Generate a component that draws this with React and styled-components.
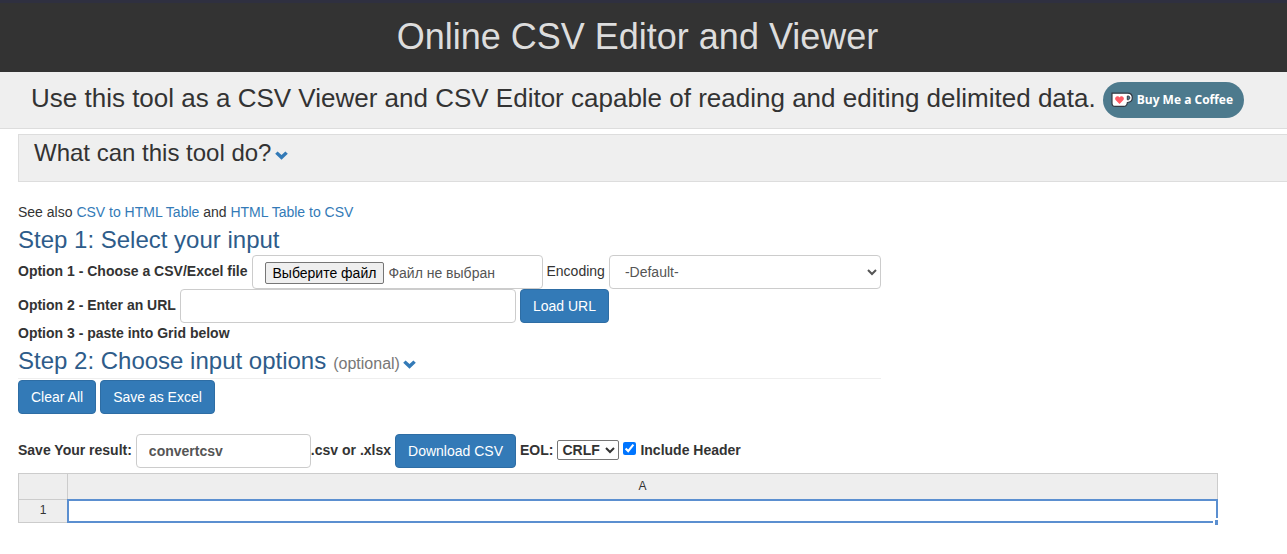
import React, { useState } from "react";
import styled, { createGlobalStyle } from "styled-components";

const GlobalStyle = createGlobalStyle`
  *, *::before, *::after { box-sizing: border-box; }
  body {
    margin: 0;
    background: #fff;
    color: #333;
    font: 14px/20px "Liberation Sans", Arial, sans-serif;
    overflow-x: hidden;
  }
  button, input, select { font-family: inherit; font-size: 14px; }
`;

const Header = styled.header`
  background: #333;
  border-top: 3px solid #2f3040;
  padding: 14px 12px 15px 0;
  text-align: center;
`;

const Title = styled.h1`
  margin: 0;
  color: #ddd;
  font-size: 36px;
  font-weight: 400;
  line-height: 40px;
`;

const Intro = styled.section`
  display: flex;
  align-items: flex-start;
  gap: 7px;
  padding: 10px 0 10px 31px;
  background: #efefef;
  border-bottom: 1px solid #ddd;
`;

const Lead = styled.h2`
  margin: 0;
  font-size: 26px;
  font-weight: 400;
  line-height: 32px;
`;

const CoffeeButton = styled.a`
  display: flex;
  align-items: center;
  gap: 4px;
  flex: none;
  width: 141px;
  height: 36px;
  padding-left: 8px;
  border-radius: 18px;
  background: #4d7a8d;
  color: #fff;
  font: 700 12px/20px "Open Sans", sans-serif;
  white-space: nowrap;
  text-decoration: none;
`;

const About = styled.section`
  margin: 5px 0 20px 18px;
  padding: 3px 15px 14px;
  background: #efefef;
  border: 1px solid #ddd;
  border-right: 0;
`;

const AboutTitle = styled.h3`
  display: flex;
  align-items: center;
  gap: 4px;
  margin: 0;
  font-size: 24px;
  font-weight: 400;
  line-height: 29px;
`;

const Toggle = styled.button`
  display: flex;
  padding: 7px 0 1px;
  border: 0;
  background: none;
  color: #337ab7;
  cursor: pointer;
`;

const Main = styled.main`
  padding: 0 18px 30px;
`;

const Form = styled.form`
  max-width: 863px;
`;

const SeeAlso = styled.p`
  margin: 0;
`;

const Link = styled.a`
  color: #337ab7;
  text-decoration: none;
`;

const StepTitle = styled.h3`
  display: flex;
  align-items: baseline;
  margin: 0;
  padding: ${(p) => (p.$ruled ? "5px 0 4px" : "5px 0 2px")};
  border-bottom: ${(p) => (p.$ruled ? "1px solid #eee" : "0")};
  color: #2e5c8a;
  font-size: 24px;
  font-weight: 400;
  line-height: 26px;
`;

const Optional = styled.small`
  margin: 0 3px 0 7px;
  color: #777;
  font-size: 16px;
  line-height: 16px;
`;

const Row = styled.div`
  display: flex;
  align-items: center;
  gap: 4px;
  margin-top: ${(p) => p.$top || 0}px;
`;

const Label = styled.label`
  flex: none;
  padding-bottom: 2px;
  font-weight: ${(p) => (p.$plain ? 400 : 700)};
`;

const Note = styled.p`
  margin: 0;
  font-weight: 700;
`;

const fieldWidth = (p) => `width: ${p.$width}px;`;

const TextField = styled.input`
  ${fieldWidth}
  height: 34px;
  padding: 6px 12px;
  border: 1px solid #ccc;
  border-radius: 4px;
  background: #fff;
  color: #555;
  font-weight: ${(p) => (p.$bold ? 700 : 400)};
`;

const FileField = styled.label`
  ${fieldWidth}
  display: flex;
  align-items: center;
  gap: 4px;
  height: 34px;
  padding: 2px 12px 0;
  border: 1px solid #ccc;
  border-radius: 4px;
  color: #555;
`;

const HiddenFile = styled.input`
  position: absolute;
  width: 1px;
  height: 1px;
  opacity: 0;
`;

const FileButton = styled.span`
  padding: 0 7px;
  border: 1px solid #767676;
  border-radius: 2px;
  background: #efefef;
  color: #000;
`;

const SelectBox = styled.select`
  flex: 1;
  min-width: 0;
  height: 34px;
  padding: 6px 12px 6px 11px;
  border: 1px solid #ccc;
  border-radius: 4px;
  background: #fff;
  color: #555;
`;

const SmallSelect = styled.select`
  width: 62px;
  height: 20px;
  margin-bottom: 3px;
  padding: 0;
  border: 1px solid #767676;
  border-radius: 2px;
  background: #fff;
  color: #333;
  font-weight: 700;
`;

const Checkbox = styled.input`
  width: 13px;
  height: 13px;
  margin: 0 0 6px;
`;

const Button = styled.button`
  height: 34px;
  padding: 6px 12px;
  border: 1px solid #2e6da4;
  border-radius: 4px;
  background: #337ab7;
  color: #fff;
  line-height: 20px;
  white-space: nowrap;
  cursor: pointer;
`;

const SaveName = styled.div`
  display: flex;
  align-items: center;
`;

const Grid = styled.table`
  width: 100%;
  max-width: 1200px;
  margin-top: 5px;
  border-collapse: separate;
  border-spacing: 0;
  table-layout: fixed;
  border-top: 1px solid #ccc;
  border-left: 1px solid #ccc;
`;

const HeadCell = styled.th`
  width: ${(p) => (p.$narrow ? "49px" : "auto")};
  height: ${(p) => (p.$tall ? 26 : 23)}px;
  padding: 0 0 2px;
  border-right: 1px solid #ccc;
  border-bottom: 1px solid #ccc;
  background: #eee;
  color: #333;
  font-size: 12px;
  font-weight: 400;
  line-height: 20px;
  text-align: center;
`;

const DataCell = styled.td`
  position: relative;
  padding: 0;
  background: #fff;
`;

const Selection = styled.div`
  position: absolute;
  inset: -1px 0 0 -1px;
  border: 2px solid #5b8fd0;

  &::after {
    content: "";
    position: absolute;
    right: -2px;
    bottom: -4px;
    width: 5px;
    height: 7px;
    border: 2px solid #fff;
    border-right-width: 0;
    border-bottom-width: 0;
    background: #5b8fd0;
  }
`;

const Chevron = () => (
  <svg width="13" height="9" viewBox="0 0 13 9" aria-hidden="true">
    <path d="M2.6 0.4 6.5 4.1 10.4 0.4 12.8 2.8 6.5 8.8 0.2 2.8Z" fill="currentColor" />
  </svg>
);

const Cup = () => (
  <svg width="22" height="16" viewBox="0 0 22 16" aria-hidden="true">
    <path
      d="M1 1.2H16.5C19.5 1.2 21.3 3 21.3 5.8S19.3 10.3 16.4 10.5C16.1 13.1 15 14.4 12.8 14.4H4C2 14.4 1 13.3 1 11.3Z"
      fill="#fff"
      stroke="#323842"
      strokeWidth="1.2"
    />
    <path d="M16.3 4H17C18.2 4 18.8 4.7 18.8 5.8S18.1 7.8 17 7.8H16.3Z" fill="#4d7a8d" stroke="#323842" />
    <path
      d="M8.5 12 4.8 8.3C3.6 7 4 4.9 5.5 4.4 6.8 3.9 7.9 4.5 8.5 5.4 9.1 4.5 10.3 3.9 11.5 4.4 13 4.9 13.4 7 12.2 8.3Z"
      fill="#ff5a64"
    />
  </svg>
);

export default function App() {
  const [fileName, setFileName] = useState("Файл не выбран");

  return (
    <>
      <GlobalStyle />
      <Header>
        <Title>Online CSV Editor and Viewer</Title>
      </Header>
      <Intro>
        <Lead>Use this tool as a CSV Viewer and CSV Editor capable of reading and editing delimited data.</Lead>
        <CoffeeButton href="#coffee">
          <Cup />
          Buy Me a Coffee
        </CoffeeButton>
      </Intro>
      <About>
        <AboutTitle>
          What can this tool do?
          <Toggle type="button" aria-label="Show details">
            <Chevron />
          </Toggle>
        </AboutTitle>
      </About>
      <Main>
        <Form onSubmit={(e) => e.preventDefault()}>
          <SeeAlso>
            See also <Link href="#csv-to-html">CSV to HTML Table</Link> and{" "}
            <Link href="#html-to-csv">HTML Table to CSV</Link>
          </SeeAlso>
          <StepTitle>Step 1: Select your input</StepTitle>
          <Row>
            <Label htmlFor="file">Option 1 - Choose a CSV/Excel file</Label>
            <FileField $width={291}>
              <HiddenFile
                id="file"
                type="file"
                onChange={(e) => setFileName(e.target.files[0]?.name || "Файл не выбран")}
              />
              <FileButton>Выберите файл</FileButton>
              {fileName}
            </FileField>
            <Label $plain htmlFor="encoding">Encoding</Label>
            <SelectBox id="encoding">
              <option>-Default-</option>
            </SelectBox>
          </Row>
          <Row>
            <Label htmlFor="url">Option 2 - Enter an URL</Label>
            <TextField id="url" type="text" $width={336} />
            <Button type="button">Load URL</Button>
          </Row>
          <Note>Option 3 - paste into Grid below</Note>
          <StepTitle $ruled>
            Step 2: Choose input options <Optional>(optional)</Optional>
            <Toggle type="button" aria-label="Show input options">
              <Chevron />
            </Toggle>
          </StepTitle>
          <Row $top={1}>
            <Button type="button">Clear All</Button>
            <Button type="button">Save as Excel</Button>
          </Row>
          <Row $top={20}>
            <Label htmlFor="name">Save Your result:</Label>
            <SaveName>
              <TextField id="name" type="text" defaultValue="convertcsv" $width={175} $bold />
              <Label htmlFor="name">.csv or .xlsx</Label>
            </SaveName>
            <Button type="button">Download CSV</Button>
            <Label htmlFor="eol">EOL:</Label>
            <SmallSelect id="eol">
              <option>CRLF</option>
            </SmallSelect>
            <Checkbox id="header" type="checkbox" defaultChecked />
            <Label htmlFor="header">Include Header</Label>
          </Row>
        </Form>
        <Grid>
          <thead>
            <tr>
              <HeadCell $narrow $tall />
              <HeadCell $tall scope="col">A</HeadCell>
            </tr>
          </thead>
          <tbody>
            <tr>
              <HeadCell scope="row">1</HeadCell>
              <DataCell>
                <Selection />
              </DataCell>
            </tr>
          </tbody>
        </Grid>
      </Main>
    </>
  );
}
